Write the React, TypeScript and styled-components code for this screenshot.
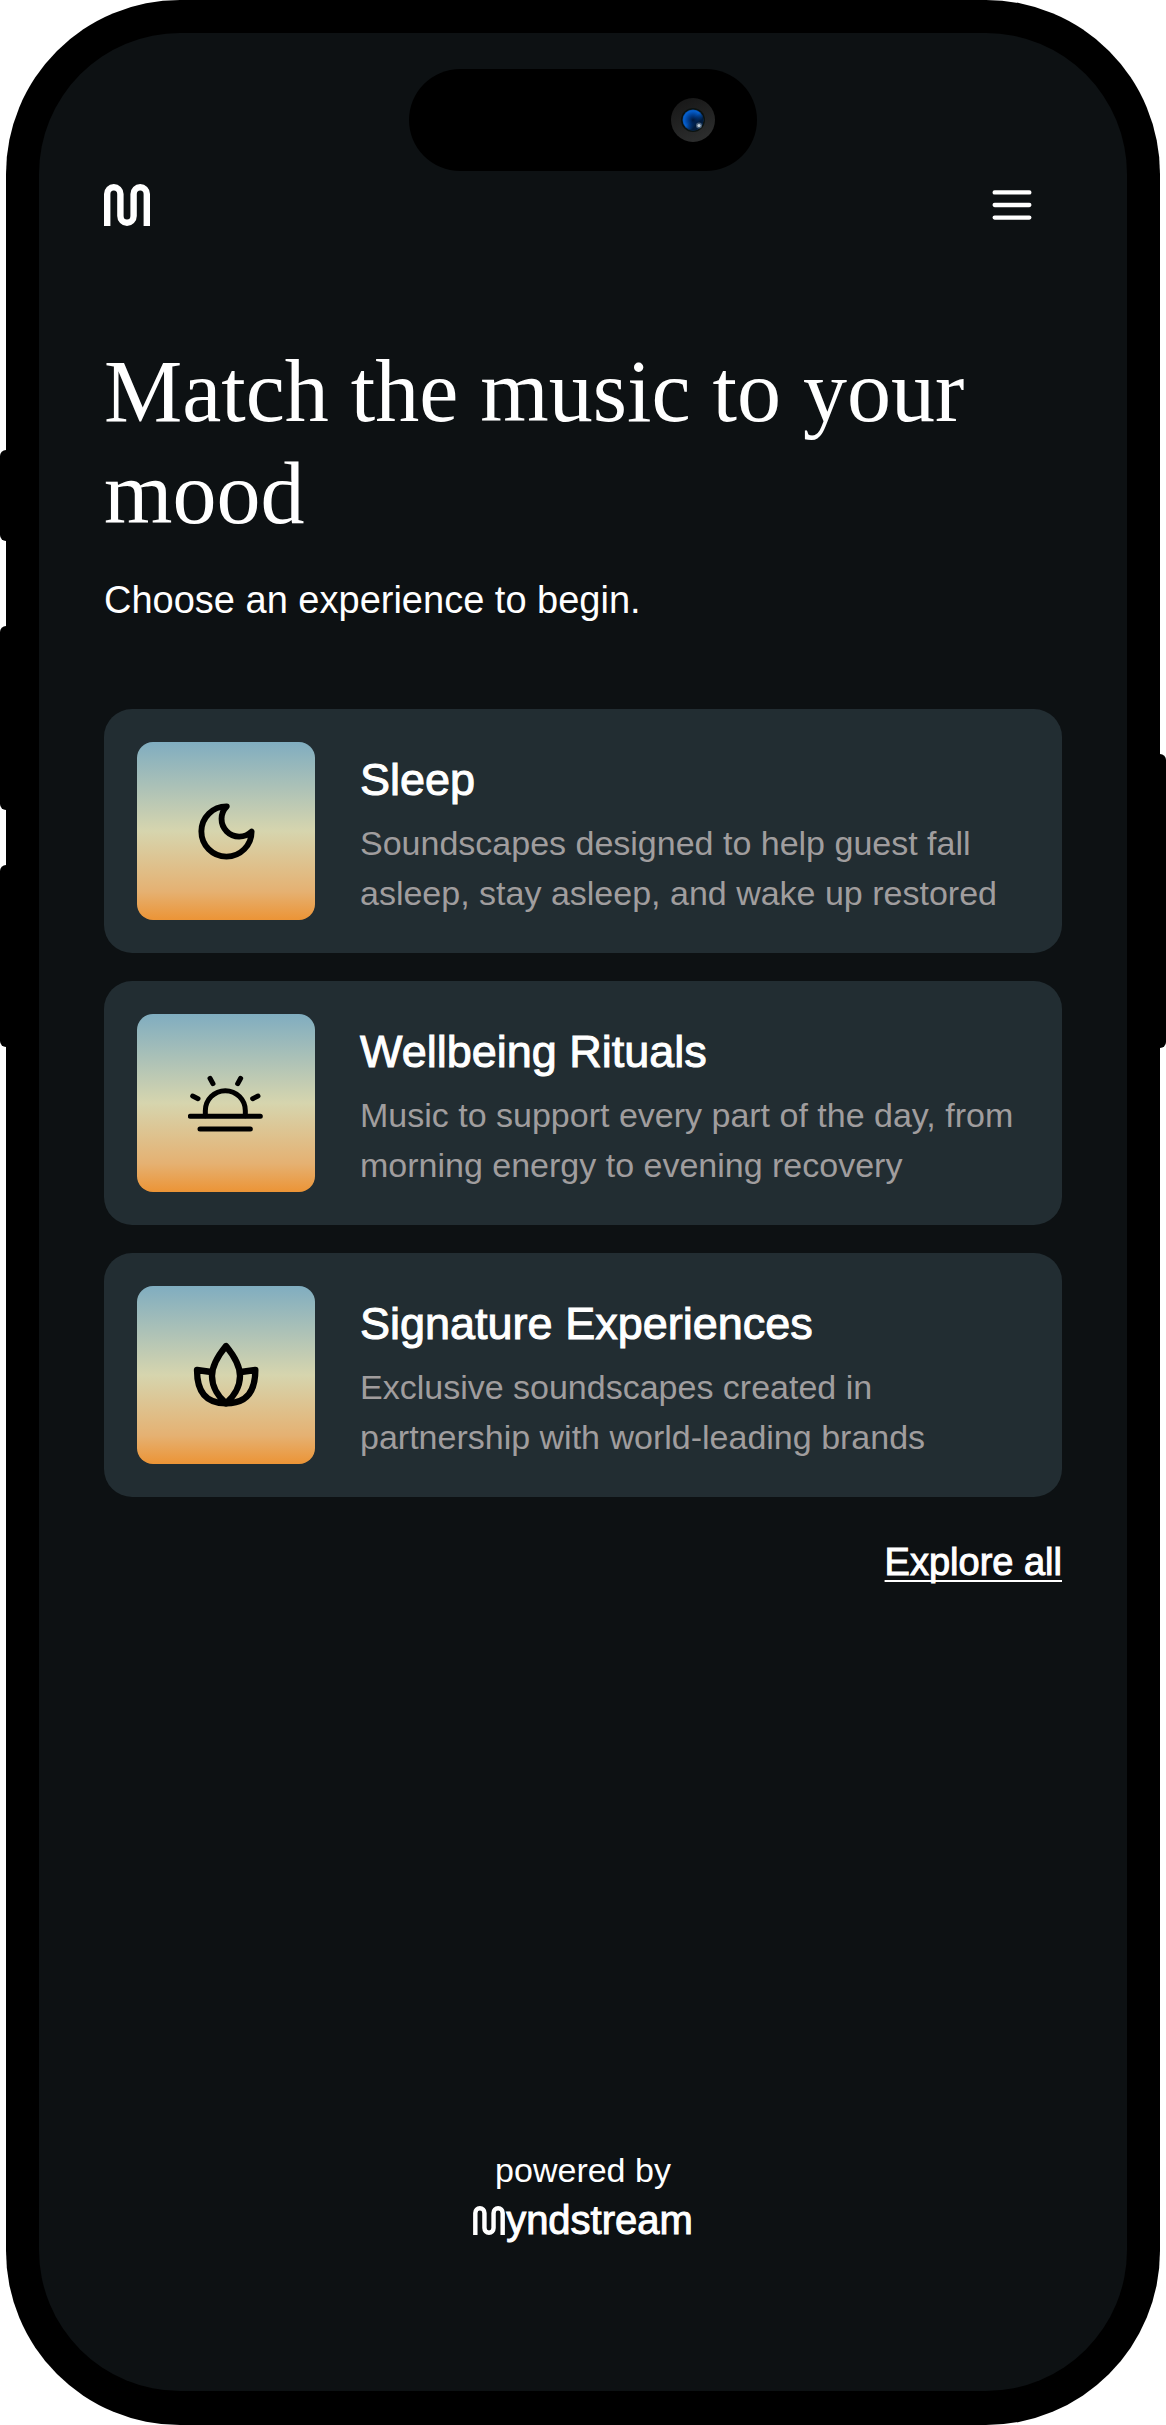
import React, { FC, ReactNode } from 'react';
import styled, { createGlobalStyle } from 'styled-components';

const sans = "'Liberation Sans', Arial, sans-serif";
const serif = "'Liberation Serif', 'Times New Roman', serif";

const GlobalStyle = createGlobalStyle`
  *, *::before, *::after {
    box-sizing: border-box;
  }
  body {
    margin: 0;
    background: #ffffff;
    font-family: ${sans};
  }
`;

const Phone = styled('div')`
  position: relative;
  display: flex;
  min-height: 100vh;
  padding: 0 6px;
`;

const Frame = styled('div')`
  position: relative;
  display: flex;
  flex: 1;
  min-width: 0;
  padding: 33px 33px 34px;
  border-radius: 174px;
  background: #000000;
`;

const SideButton = styled('span')<{
  side: 'left' | 'right';
  top: number;
  length: number;
}>`
  position: absolute;
  ${props => props.side}: 0;
  top: ${props => props.top}px;
  width: 20px;
  height: ${props => props.length}px;
  border-radius: 6px;
  background: #000000;
`;

const Screen = styled('div')`
  display: flex;
  flex: 1;
  flex-direction: column;
  min-width: 0;
  padding: 36px 65px 148px;
  border-radius: 141px;
  background: #0d1113;
  color: #ffffff;
`;

const Island = styled('div')`
  display: flex;
  align-items: center;
  justify-content: flex-end;
  align-self: center;
  width: 348px;
  height: 102px;
  padding-right: 42px;
  border-radius: 51px;
  background: #000000;
`;

const Header = styled('header')`
  display: flex;
  align-items: center;
  justify-content: space-between;
  margin-top: 8px;
  padding-right: 24px;
`;

const HomeLink = styled('a')`
  display: flex;
  color: inherit;
`;

const MenuButton = styled('button')`
  display: flex;
  padding: 0;
  border: 0;
  background: none;
  color: inherit;
  cursor: pointer;
`;

const Title = styled('h1')`
  margin: 110px 0 0;
  font-family: ${serif};
  font-size: 88px;
  font-weight: 400;
  line-height: 102px;
`;

const Subtitle = styled('p')`
  margin: 32px 0 0;
  font-size: 38px;
  line-height: 46px;
`;

const CardList = styled('nav')`
  display: flex;
  flex-direction: column;
  gap: 28px;
  margin-top: 86px;
`;

const Card = styled('a')`
  display: flex;
  align-items: flex-start;
  gap: 45px;
  padding: 33px;
  border-radius: 28px;
  background: #222d32;
  color: inherit;
  text-decoration: none;
`;

const Tile = styled('div')`
  display: flex;
  flex-shrink: 0;
  align-items: center;
  justify-content: center;
  width: 178px;
  height: 178px;
  border-radius: 16px;
  background: linear-gradient(
    #80adc0 0%,
    #d6d5ae 50%,
    #e5b172 84%,
    #ec9436 100%
  );
  color: #000000;
`;

const CardText = styled('div')`
  min-width: 0;
  padding-top: 10px;
`;

const CardTitle = styled('h2')`
  margin: 0;
  font-size: 45px;
  font-weight: 400;
  line-height: 56px;
  -webkit-text-stroke: 1px currentColor;
`;

const CardBody = styled('p')`
  margin: 10px 0 0;
  color: #a09d9e;
  font-size: 34px;
  line-height: 50px;
`;

const ExploreLink = styled('a')`
  align-self: flex-end;
  margin-top: 42px;
  color: inherit;
  font-size: 38px;
  line-height: 46px;
  text-decoration: underline;
  text-decoration-thickness: 2px;
  text-decoration-skip-ink: none;
  text-underline-offset: 5px;
  -webkit-text-stroke: 1px currentColor;
`;

const Footer = styled('footer')`
  display: flex;
  flex-direction: column;
  align-items: center;
  gap: 2px;
  margin-top: auto;
  font-size: 34px;
  line-height: 50px;
`;

const Brand = styled('div')`
  display: flex;
  align-items: center;
  gap: 1px;
  font-size: 40px;
  line-height: 46px;
  -webkit-text-stroke: 1px currentColor;
`;

const LogoMark: FC<{ width: number; height: number }> = ({ width, height }) => (
  <svg
    width={width}
    height={height}
    viewBox="0 0 46 42"
    fill="none"
    stroke="currentColor"
    strokeWidth="6.4"
    aria-hidden="true"
  >
    <path d="M3.2 42V10a6.6 6.8 0 0 1 13.2 0v22a6.6 6.8 0 0 0 13.2 0V10a6.6 6.8 0 0 1 13.2 0v32" />
  </svg>
);

const MenuIcon = () => (
  <svg
    width="52"
    height="52"
    viewBox="0 0 24 24"
    fill="none"
    stroke="currentColor"
    strokeWidth="2"
    strokeLinecap="round"
    aria-hidden="true"
  >
    <path d="M4 6.2h16M4 12h16M4 17.8h16" />
  </svg>
);

const Camera = () => (
  <svg width="44" height="44" viewBox="0 0 44 44" aria-hidden="true">
    <defs>
      <linearGradient id="ring" x1="0" y1="0" x2="0.4" y2="1">
        <stop offset="0" stopColor="#151515" />
        <stop offset="1" stopColor="#2b2c2c" />
      </linearGradient>
      <radialGradient id="lens" cx="0.5" cy="0.5" r="0.55">
        <stop offset="0" stopColor="#00173c" />
        <stop offset="0.45" stopColor="#003f93" />
        <stop offset="0.8" stopColor="#0660cf" />
        <stop offset="1" stopColor="#06336b" />
      </radialGradient>
      <linearGradient id="shade" x1="0.25" y1="0.2" x2="0.85" y2="0.8">
        <stop offset="0.4" stopColor="#001026" stopOpacity="0" />
        <stop offset="0.8" stopColor="#001026" stopOpacity="0.85" />
      </linearGradient>
    </defs>
    <circle cx="22" cy="22" r="22" fill="url(#ring)" />
    <circle cx="22" cy="22" r="12" fill="#0b1210" />
    <circle cx="22" cy="22" r="10.5" fill="url(#lens)" />
    <circle cx="22" cy="22" r="10.5" fill="url(#shade)" />
    <circle cx="28" cy="27.5" r="3" fill="#8fa3b8" fillOpacity="0.5" />
    <circle cx="28" cy="27.5" r="1.6" fill="#c3cfda" />
  </svg>
);

const MoonIcon = () => (
  <svg
    width="67"
    height="67"
    viewBox="0 0 24 24"
    fill="none"
    stroke="currentColor"
    strokeWidth="2.1"
    strokeLinecap="round"
    strokeLinejoin="round"
    aria-hidden="true"
  >
    <path d="M12.1 3a6.2 6.2 0 0 0 8.9 9 9 9 0 1 1-8.9-9Z" />
  </svg>
);

const SunriseIcon = () => (
  <svg
    width="76"
    height="57"
    viewBox="53 73 228 171"
    fill="none"
    stroke="currentColor"
    strokeWidth="15"
    strokeLinecap="round"
    aria-hidden="true"
  >
    <path d="M60 197H270M89 235H240" />
    <path d="M105 195V180a60 60 0 0 1 120 0V195" />
    <path d="M119 83l9 16M211 83l-9 16M67 136l16 8M263 136l-16 8" />
  </svg>
);

const LotusIcon = () => (
  <svg
    width="66"
    height="66"
    viewBox="70 66 198 198"
    fill="none"
    stroke="currentColor"
    strokeWidth="19"
    strokeLinecap="round"
    strokeLinejoin="round"
    aria-hidden="true"
  >
    <path d="M169 78C150 101 127 132 127 168c0 35 22 65 42 82 20-17 42-47 42-82 0-36-23-67-42-90Z" />
    <path d="M125 156l-43-6c0 62 24 100 87 100 64 0 88-38 88-100l-43 6" />
  </svg>
);

interface IExperience {
  title: string;
  body: string;
  icon: ReactNode;
}

const experiences: IExperience[] = [
  {
    title: 'Sleep',
    body: 'Soundscapes designed to help guest fall asleep, stay asleep, and wake up restored',
    icon: <MoonIcon />,
  },
  {
    title: 'Wellbeing Rituals',
    body: 'Music to support every part of the day, from morning energy to evening recovery',
    icon: <SunriseIcon />,
  },
  {
    title: 'Signature Experiences',
    body: 'Exclusive soundscapes created in partnership with world-leading brands',
    icon: <LotusIcon />,
  },
];

const ExperienceCard: FC<IExperience> = ({ title, body, icon }) => (
  <Card href="#">
    <Tile>{icon}</Tile>
    <CardText>
      <CardTitle>{title}</CardTitle>
      <CardBody>{body}</CardBody>
    </CardText>
  </Card>
);

const App: FC = () => (
  <Phone>
    <GlobalStyle />
    <SideButton side="left" top={450} length={91} />
    <SideButton side="left" top={626} length={184} />
    <SideButton side="left" top={865} length={182} />
    <SideButton side="right" top={754} length={294} />
    <Frame>
      <Screen>
        <Island>
          <Camera />
        </Island>
        <Header>
          <HomeLink href="#" aria-label="Home">
            <LogoMark width={46} height={42} />
          </HomeLink>
          <MenuButton type="button" aria-label="Menu">
            <MenuIcon />
          </MenuButton>
        </Header>
        <main>
          <Title>Match the music to your mood</Title>
          <Subtitle>Choose an experience to begin.</Subtitle>
          <CardList>
            {experiences.map(item => (
              <ExperienceCard key={item.title} {...item} />
            ))}
          </CardList>
        </main>
        <ExploreLink href="#">Explore all</ExploreLink>
        <Footer>
          <span>powered by</span>
          <Brand>
            <LogoMark width={32} height={29} />
            yndstream
          </Brand>
        </Footer>
      </Screen>
    </Frame>
  </Phone>
);

export default App;
